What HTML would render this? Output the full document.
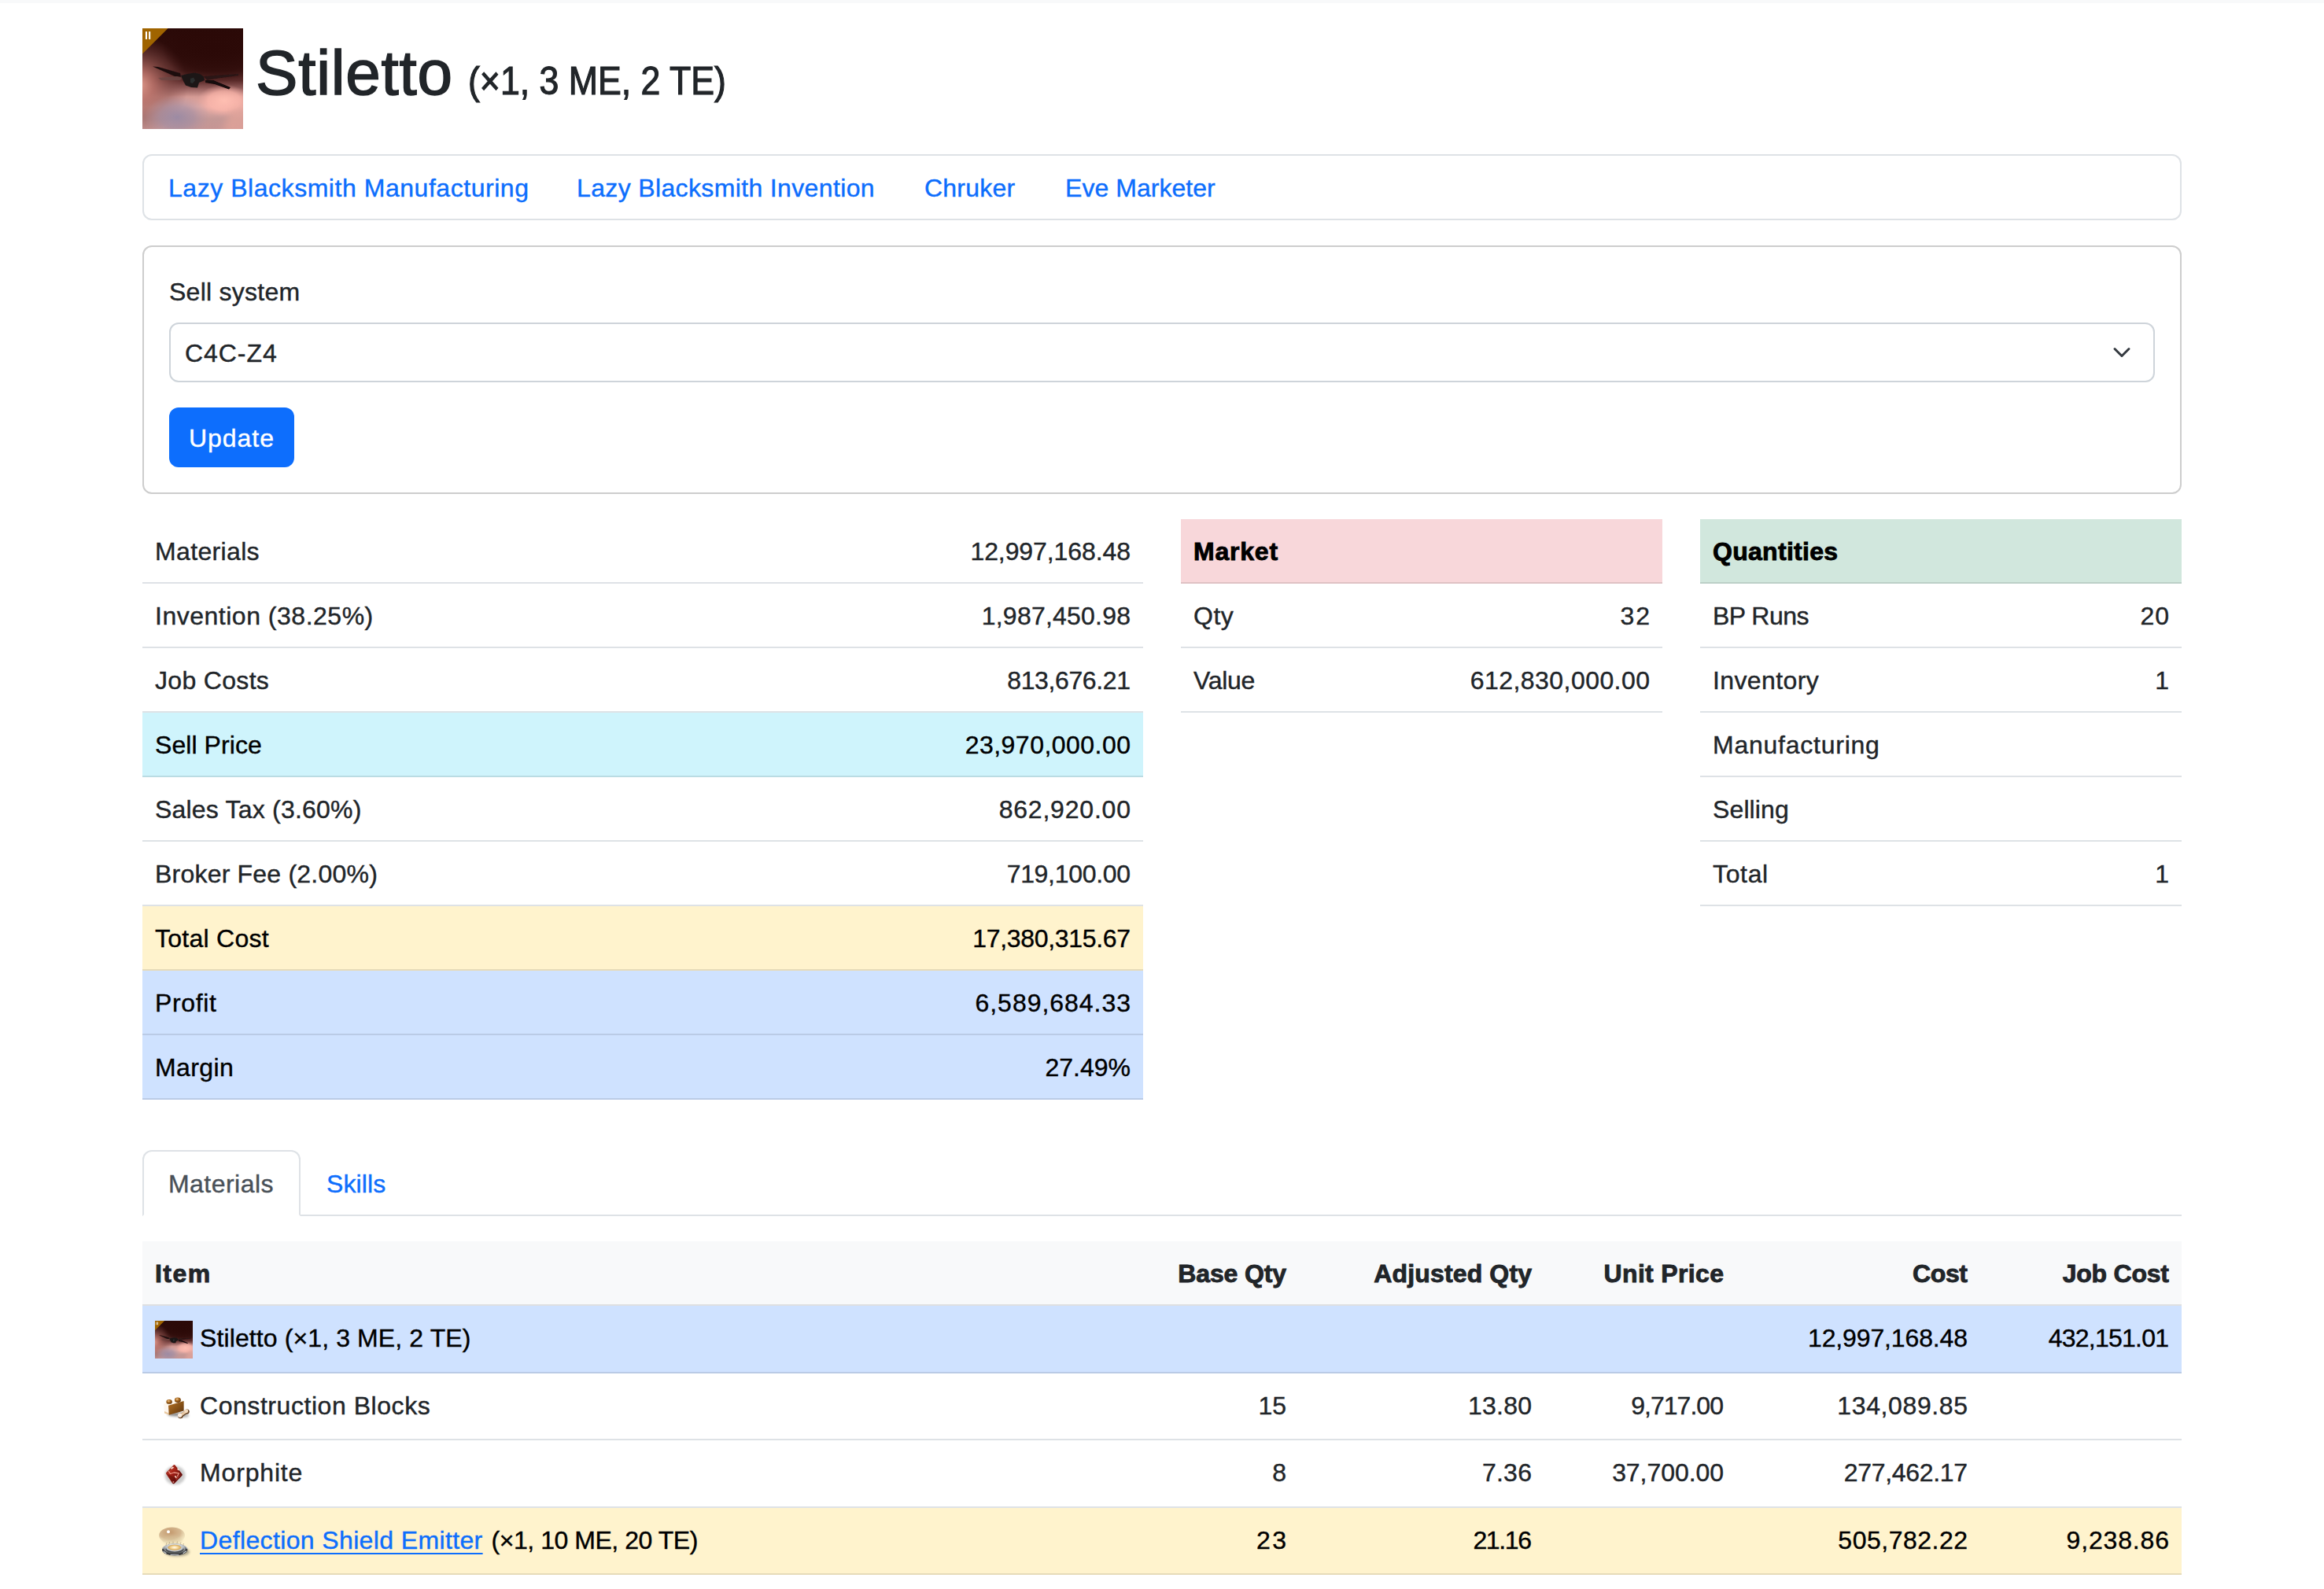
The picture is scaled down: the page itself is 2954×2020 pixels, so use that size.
<!DOCTYPE html>
<html lang="en">
<head>
<meta charset="utf-8">
<title>Stiletto</title>
<style>
*{box-sizing:border-box}
html,body{margin:0;padding:0}
body{width:2954px;height:2020px;overflow:hidden;background:#fff;color:#212529;
  font-family:"Liberation Sans",sans-serif;font-size:32px;line-height:48px;position:relative;
  -webkit-text-stroke:0.4px currentColor}
a{color:#0d6efd;text-decoration:none}
span{white-space:nowrap}
.topbar{position:absolute;left:0;top:0;width:2954px;height:4px;background:#f8f9fa}
.wrap{position:absolute;left:181px;top:0;width:2592px}
/* title */
.title{position:absolute;left:0;top:36px;height:128px;width:2592px}
.title .pic{position:absolute;left:0;top:0;width:128px;height:128px}
.title h1{position:absolute;left:144px;top:9px;margin:0;font-size:80px;line-height:96px;font-weight:400;white-space:nowrap;color:#212529;-webkit-text-stroke:1.6px currentColor}
.title h1 small{position:absolute;left:270px;top:10px;font-size:50px;-webkit-text-stroke:1.2px currentColor;transform:scaleX(.893);transform-origin:0 0}
/* nav links */
.links{position:absolute;left:0;top:196px;width:2592px;height:84px;border:2px solid #dee2e6;border-radius:12px;white-space:nowrap}
.links a{position:absolute;top:17px;line-height:48px}
/* form card */
.card{position:absolute;left:0;top:312px;width:2592px;height:316px;border:2px solid #cdcdcd;border-radius:12px}
.card label{position:absolute;left:32px;top:33px}
.card .select{position:absolute;left:32px;top:96px;width:2524px;height:76px;border:2px solid #ced4da;border-radius:12px;padding:13px 0 0 18px}
.card .select svg{position:absolute;right:24px;top:24px;width:32px;height:24px}
.card .btn{position:absolute;left:32px;top:204px;width:159px;height:76px;background:#0d6efd;border-radius:12px;color:#fff;text-align:center;padding-top:15px;line-height:48px}
/* tables */
table{border-collapse:separate;border-spacing:0;position:absolute;table-layout:fixed}
td,th{padding:17px 16px 0;height:82px;border-bottom:2px solid #dee2e6;vertical-align:top;white-space:nowrap;text-align:left;font-weight:400}
th{font-weight:700;-webkit-text-stroke:0.9px currentColor}
.r{text-align:right}
.t1{left:0;top:660px;width:1272px}
.t2{left:1320px;top:660px;width:612px}
.t3{left:1980px;top:660px;width:612px}
tr.info td{background:#cff4fc;color:#000;border-color:#badce3}
tr.warn td{background:#fff3cd;color:#000;border-color:#e6dbb9}
tr.prim td{background:#cfe2ff;color:#000;border-color:#bacbe6}
tr.dang th{background:#f8d7da;color:#000;border-color:#dfc2c4}
tr.succ th{background:#d1e7dd;color:#000;border-color:#bcd0c7}
tr.light th{background:#f8f9fa;color:#212529;border-color:#dfe0e1}
/* tabs */
.tabs{position:absolute;left:0;top:1462px;width:2592px;height:84px;border-bottom:2px solid #dee2e6}
.tabs .act{position:absolute;left:0;top:0;width:201px;height:84px;border:2px solid #dee2e6;border-bottom-color:#fff;border-radius:12px 12px 0 0;background:#fff;color:#495057;padding:17px 0 0 31px;line-height:48px}
.tabs .oth{position:absolute;left:234px;top:19px;line-height:48px}
/* materials table */
.t4{left:0;top:1578px;width:2592px}
.t4 td.i{position:relative;padding-left:73px}
.t4 td.i .ic{position:absolute;left:16px;top:19px;width:48px;height:48px}
.t4 td a{text-decoration:underline;text-decoration-thickness:2px;text-underline-offset:5px}
</style>
</head>
<body>
<svg width="0" height="0" style="position:absolute">
<defs>
  <linearGradient id="gBg" x1="0" y1="0" x2="0" y2="1">
    <stop offset="0" stop-color="#2a0907"/><stop offset=".25" stop-color="#2f0d0b"/><stop offset=".42" stop-color="#3d1715"/>
    <stop offset=".52" stop-color="#5a2a29"/><stop offset=".6" stop-color="#96605e"/><stop offset=".68" stop-color="#d49a94"/>
    <stop offset=".78" stop-color="#e6aea8"/><stop offset=".9" stop-color="#c49896"/><stop offset="1" stop-color="#c69594"/>
  </linearGradient>
  <radialGradient id="gL" cx="-4" cy="72" r="62" gradientUnits="userSpaceOnUse"><stop offset="0" stop-color="#e09a8c"/><stop offset=".3" stop-color="#b87068" stop-opacity=".85"/><stop offset=".65" stop-color="#8a504c" stop-opacity=".5"/><stop offset="1" stop-color="#7a4040" stop-opacity="0"/></radialGradient>
  <radialGradient id="gB" cx="44" cy="112" r="42" gradientUnits="userSpaceOnUse" gradientTransform="translate(0 38) scale(1 .667)"><stop offset="0" stop-color="#9a8aa4" stop-opacity=".95"/><stop offset=".5" stop-color="#a48ea2" stop-opacity=".7"/><stop offset="1" stop-color="#b494a0" stop-opacity="0"/></radialGradient>
  <radialGradient id="gP" cx="104" cy="92" r="34" gradientUnits="userSpaceOnUse" gradientTransform="translate(0 36.8) scale(1 .6)"><stop offset="0" stop-color="#ffbfb2"/><stop offset=".6" stop-color="#ffb8ac" stop-opacity=".7"/><stop offset="1" stop-color="#f0a8a0" stop-opacity="0"/></radialGradient>
  <radialGradient id="gD" cx="95" cy="25" r="70" gradientUnits="userSpaceOnUse" gradientTransform="translate(0 10) scale(1 .6)"><stop offset="0" stop-color="#2b0907"/><stop offset=".7" stop-color="#2b0907" stop-opacity=".6"/><stop offset="1" stop-color="#2b0907" stop-opacity="0"/></radialGradient>
  <filter id="fB" x="-20%" y="-20%" width="140%" height="140%"><feGaussianBlur stdDeviation="0.7"/></filter><filter id="fC" x="-40%" y="-40%" width="180%" height="180%"><feGaussianBlur stdDeviation="5"/></filter>
  <symbol id="ship" viewBox="0 0 128 128">
    <rect width="128" height="128" fill="url(#gBg)"/>
    <rect width="128" height="128" fill="url(#gL)"/>
    <rect width="128" height="128" fill="url(#gD)"/>
    <rect width="128" height="128" fill="url(#gP)"/>
    <rect width="128" height="128" fill="url(#gB)"/>
    <path d="M134 98 L112 104 L100 134 L134 134Z" fill="#e4a49a" opacity=".7" filter="url(#fC)"/>
    <g filter="url(#fB)">
      <path d="M13 48.5 L20 49 L48 57 L49 61.5 L41 61 Z" fill="#1d0c0d"/>
      <path d="M20 63 L44 61 L50 63 L48 66 L24 66Z" fill="#6a4844" opacity=".75"/>
      <path d="M49 60 L57 58 L66 56.5 L73 58 L78 61.5 L79 66 L72 69 L70 75.5 L62 75 L55 72.5 L52 67 Z" fill="#1b1717"/>
      <path d="M78 61 L96 59.5 L122 58 L122 60 L96 63.5 L82 66 Z" fill="#2a1414"/>
      <path d="M80 66 L90 66 L112 75 L110 77.5 L92 71 L80 69 Z" fill="#120708"/>
      <path d="M61 64 L65 62.5 L67 66 L64 70 L61 69Z" fill="#3a3f40" opacity=".55"/>
    </g>
    <path d="M0 0H32.5L0 32.5Z" fill="#a06400"/>
    <rect x="3.9" y="4.1" width="2.1" height="9.8" fill="#fff"/><rect x="8.1" y="4.1" width="2.1" height="9.8" fill="#fff"/>
  </symbol>
</defs>
</svg>
<svg width="0" height="0" style="position:absolute">
<defs>
  <filter id="fS" x="-50%" y="-50%" width="200%" height="200%"><feGaussianBlur stdDeviation="1.6"/></filter>
  <filter id="fT" x="-50%" y="-50%" width="200%" height="200%"><feGaussianBlur stdDeviation="0.35"/></filter>
  <linearGradient id="cbF" x1="0" y1="0" x2="1" y2="1"><stop offset="0" stop-color="#b87428"/><stop offset=".5" stop-color="#8a5418"/><stop offset="1" stop-color="#5a3410"/></linearGradient>
  <radialGradient id="cbS" cx=".4" cy=".35" r=".7"><stop offset="0" stop-color="#f0c890"/><stop offset=".45" stop-color="#a86820"/><stop offset="1" stop-color="#5a3008"/></radialGradient>
  <linearGradient id="cbB" x1="0" y1="0" x2="1" y2="1"><stop offset="0" stop-color="#fff4e4"/><stop offset=".55" stop-color="#e0b890"/><stop offset="1" stop-color="#7a5030"/></linearGradient>
  <linearGradient id="moG" x1="0" y1="0" x2="1" y2="1"><stop offset="0" stop-color="#d85844"/><stop offset=".35" stop-color="#a82418"/><stop offset=".7" stop-color="#7c140c"/><stop offset="1" stop-color="#500a06"/></linearGradient>
  <radialGradient id="dsD" cx=".42" cy=".3" r=".75"><stop offset="0" stop-color="#c09468" stop-opacity=".95"/><stop offset=".55" stop-color="#c4a078" stop-opacity=".7"/><stop offset="1" stop-color="#d8c8a0" stop-opacity="0"/></radialGradient>
  <radialGradient id="dsG" cx=".5" cy=".5" r=".5"><stop offset="0" stop-color="#fffdf2"/><stop offset=".45" stop-color="#f8dca4"/><stop offset="1" stop-color="#d4a450"/></radialGradient>
  <linearGradient id="dsR" x1="0" y1="0" x2="0" y2="1"><stop offset="0" stop-color="#e8ecee"/><stop offset=".5" stop-color="#9aa0a4"/><stop offset="1" stop-color="#5a5e60"/></linearGradient>
</defs>
</svg>

<div class="topbar"></div>
<div class="wrap">

<div class="title">
  <svg class="pic" viewBox="0 0 128 128"><use href="#ship"/></svg>
  <h1><span style="letter-spacing:0.79px">Stiletto</span><small><span>(×1, 3 ME, 2 TE)</span></small></h1>
</div>

<div class="links">
  <a href="#" style="left:31px"><span style="letter-spacing:0.54px">Lazy Blacksmith Manufacturing</span></a>
  <a href="#" style="left:550px"><span style="letter-spacing:0.36px">Lazy Blacksmith Invention</span></a>
  <a href="#" style="left:992px"><span style="letter-spacing:0.22px">Chruker</span></a>
  <a href="#" style="left:1171px"><span style="letter-spacing:0.04px">Eve Marketer</span></a>
</div>

<div class="card">
  <label><span style="letter-spacing:0.26px">Sell system</span></label>
  <div class="select"><span style="letter-spacing:0.94px">C4C-Z4</span><svg viewBox="0 0 32 24"><path d="M7 7.5L16 16.5L25 7.5" fill="none" stroke="#343a40" stroke-width="3" stroke-linecap="round" stroke-linejoin="round"/></svg></div>
  <div class="btn"><span style="letter-spacing:0.96px">Update</span></div>
</div>

<table class="t1">
  <tr><td><span style="letter-spacing:0.35px">Materials</span></td><td class="r"><span style="letter-spacing:-0.09px;margin-right:0.09px">12,997,168.48</span></td></tr>
  <tr><td><span style="letter-spacing:0.51px">Invention (38.25%)</span></td><td class="r"><span style="letter-spacing:0.22px;margin-right:-0.22px">1,987,450.98</span></td></tr>
  <tr><td><span style="letter-spacing:0.32px">Job Costs</span></td><td class="r"><span style="letter-spacing:-0.38px;margin-right:0.38px">813,676.21</span></td></tr>
  <tr class="info"><td><span style="letter-spacing:0.07px">Sell Price</span></td><td class="r"><span style="letter-spacing:0.47px;margin-right:-0.47px">23,970,000.00</span></td></tr>
  <tr><td><span style="letter-spacing:0.20px">Sales Tax (3.60%)</span></td><td class="r"><span style="letter-spacing:0.80px;margin-right:-0.80px">862,920.00</span></td></tr>
  <tr><td><span style="letter-spacing:0.21px">Broker Fee (2.00%)</span></td><td class="r"><span style="letter-spacing:-0.31px;margin-right:0.31px">719,100.00</span></td></tr>
  <tr class="warn"><td><span style="letter-spacing:0.26px">Total Cost</span></td><td class="r"><span style="letter-spacing:-0.33px;margin-right:0.33px">17,380,315.67</span></td></tr>
  <tr class="prim"><td><span style="letter-spacing:0.64px">Profit</span></td><td class="r"><span style="letter-spacing:0.97px;margin-right:-0.97px">6,589,684.33</span></td></tr>
  <tr class="prim"><td><span style="letter-spacing:0.40px">Margin</span></td><td class="r"><span>27.49%</span></td></tr>
</table>

<table class="t2">
  <tr class="dang"><th colspan="2"><span style="letter-spacing:0.78px">Market</span></th></tr>
  <tr><td><span style="letter-spacing:0.50px">Qty</span></td><td class="r"><span style="letter-spacing:2.00px;margin-right:-2.00px">32</span></td></tr>
  <tr><td><span style="letter-spacing:-0.27px">Value</span></td><td class="r"><span style="letter-spacing:0.44px;margin-right:-0.44px">612,830,000.00</span></td></tr>
</table>

<table class="t3">
  <tr class="succ"><th colspan="2"><span style="letter-spacing:0.29px">Quantities</span></th></tr>
  <tr><td><span style="letter-spacing:-0.55px">BP Runs</span></td><td class="r"><span style="letter-spacing:1.00px;margin-right:-1.00px">20</span></td></tr>
  <tr><td><span style="letter-spacing:0.38px">Inventory</span></td><td class="r">1</td></tr>
  <tr><td><span style="letter-spacing:0.76px">Manufacturing</span></td><td class="r"></td></tr>
  <tr><td><span style="letter-spacing:0.12px">Selling</span></td><td class="r"></td></tr>
  <tr><td><span style="letter-spacing:0.65px">Total</span></td><td class="r">1</td></tr>
</table>

<div class="tabs">
  <div class="act"><span style="letter-spacing:0.46px">Materials</span></div>
  <a class="oth" href="#"><span style="letter-spacing:0.10px">Skills</span></a>
</div>

<table class="t4">
  <colgroup><col style="width:1158px"><col style="width:312px"><col style="width:312px"><col style="width:244px"><col style="width:310px"><col style="width:256px"></colgroup>
  <tr class="light"><th><span style="letter-spacing:1.47px">Item</span></th><th class="r"><span style="letter-spacing:-0.14px;margin-right:0.14px">Base Qty</span></th><th class="r"><span style="letter-spacing:0.14px;margin-right:-0.14px">Adjusted Qty</span></th><th class="r"><span style="letter-spacing:0.34px;margin-right:-0.34px">Unit Price</span></th><th class="r"><span style="letter-spacing:-0.40px;margin-right:0.40px">Cost</span></th><th class="r"><span style="letter-spacing:-0.23px;margin-right:0.23px">Job Cost</span></th></tr>
  <tr class="prim" style="height:86px"><td class="i"><svg class="ic" viewBox="0 0 128 128"><use href="#ship"/></svg><span style="letter-spacing:0.11px">Stiletto (×1, 3 ME, 2 TE)</span></td><td></td><td></td><td></td><td class="r"><span style="letter-spacing:-0.14px;margin-right:0.14px">12,997,168.48</span></td><td class="r"><span style="letter-spacing:-0.77px;margin-right:0.77px">432,151.01</span></td></tr>
  <tr style="height:85px"><td class="i"><svg class="ic" viewBox="0 0 48 48"><ellipse cx="27" cy="33" rx="11" ry="2.6" fill="#000" opacity=".45" filter="url(#fS)"/><ellipse cx="38" cy="34.5" rx="5" ry="2.2" fill="#000" opacity=".3" filter="url(#fS)"/><g filter="url(#fT)"><path d="M11.1 19.5L30 13.5L36.6 16L17 21.8Z" fill="#fff6e8"/><path d="M11.1 19.5L17 21.8L17.7 33.7L12 31.5Z" fill="#fdf6ee"/><path d="M12 29L17.6 31.5L17.7 33.7L12 31.5Z" fill="#e8c8a0"/><path d="M17 21.8L36.6 16L36.6 28.4L17.7 33.7Z" fill="url(#cbF)"/><ellipse cx="18.1" cy="16.9" rx="3.8" ry="2.9" fill="url(#cbS)"/><ellipse cx="28.9" cy="14.7" rx="4" ry="3.3" fill="url(#cbS)"/><path d="M32.2 35.2L41 29.2" stroke="#5a3a20" stroke-width="4.6" stroke-linecap="round"/><circle cx="32.4" cy="35" r="3.3" fill="#6a4426"/><circle cx="40.6" cy="29.6" r="3.1" fill="#6a4426"/><path d="M31.8 34.6L40.4 28.8" stroke="#e8c8a4" stroke-width="3.2" stroke-linecap="round"/><circle cx="31.6" cy="34.2" r="2.6" fill="#fbeee0"/><circle cx="39.8" cy="28.8" r="2.4" fill="#f4dcc0"/></g></svg><span style="letter-spacing:0.55px">Construction Blocks</span></td><td class="r"><span style="letter-spacing:-0.10px;margin-right:0.10px">15</span></td><td class="r"><span style="letter-spacing:0.23px;margin-right:-0.23px">13.80</span></td><td class="r"><span style="letter-spacing:-0.96px;margin-right:0.96px">9,717.00</span></td><td class="r"><span style="letter-spacing:0.61px;margin-right:-0.61px">134,089.85</span></td><td></td></tr>
  <tr style="height:86px"><td class="i"><svg class="ic" viewBox="0 0 48 48"><ellipse cx="25.5" cy="25.5" rx="13" ry="12" fill="#000" opacity=".2" filter="url(#fS)"/><g filter="url(#fT)"><path d="M24.5 14L33 24.8L23.6 34.4L15.8 22.9Z" fill="url(#moG)" stroke="url(#moG)" stroke-width="3.6" stroke-linejoin="round"/><path d="M24.5 13L34 24.8L23.5 35.4L14.8 22.8Z" fill="none" stroke="#4a0a08" stroke-width=".7" stroke-linejoin="round" opacity=".7"/><path d="M17.5 20.5L19.5 23.5L24 22L30.5 22.8L28.5 26.5" fill="none" stroke="#f4a494" stroke-width="1.3" stroke-linecap="round" stroke-linejoin="round" opacity=".9"/><path d="M21 16.8L23 15.6M29 17.5L30 18.5M25.8 26.8L27 28.2" stroke="#ffe0d4" stroke-width="1.7" stroke-linecap="round"/><path d="M16 24L23.5 34.5L28 30L22 27Z" fill="#5a0c08" opacity=".5"/><path d="M26 29L31 26L33 25L27 32Z" fill="#c84838" opacity=".6"/><circle cx="23.4" cy="34" r="1" fill="#f0b0a0" opacity=".8"/></g></svg><span style="letter-spacing:0.84px">Morphite</span></td><td class="r">8</td><td class="r"><span style="letter-spacing:0.27px;margin-right:-0.27px">7.36</span></td><td class="r"><span style="letter-spacing:-0.06px;margin-right:0.06px">37,700.00</span></td><td class="r"><span style="letter-spacing:-0.32px;margin-right:0.32px">277,462.17</span></td><td></td></tr>
  <tr class="warn" style="height:85px"><td class="i"><svg class="ic" viewBox="0 0 48 48"><ellipse cx="21.6" cy="16" rx="16.5" ry="10.5" fill="url(#dsD)"/><ellipse cx="22" cy="22" rx="13" ry="6" fill="#d8c8a0" opacity=".35" filter="url(#fS)"/><circle cx="17" cy="11.2" r="2" fill="#fff" filter="url(#fT)"/><ellipse cx="28" cy="37" rx="16" ry="5.5" fill="#000" opacity=".3" filter="url(#fS)"/><g filter="url(#fT)"><ellipse cx="25.2" cy="34" rx="16.2" ry="7.6" fill="#3c3e40"/><path d="M9.5 33 A16 7.4 0 0 1 41 33" fill="none" stroke="#b8bcc0" stroke-width="1.4"/><ellipse cx="25" cy="32.8" rx="13.8" ry="6.2" fill="url(#dsR)"/><ellipse cx="25" cy="33.6" rx="11.6" ry="4.4" fill="#4a4c4e"/><ellipse cx="25" cy="31.9" rx="10.8" ry="4.5" fill="#c4c8cc"/><ellipse cx="24.8" cy="31.2" rx="8.4" ry="3.5" fill="url(#dsG)"/><path d="M11 36.5L14 38.5M20 40.5L30 40.8M36 38.5L39.5 36" stroke="#c8ccd0" stroke-width="1.2" stroke-linecap="round"/><path d="M14 28.5L15 25M18 27L18.5 24M23 26L23 23.5M28 26L28.5 23.5M32 27L33 24.5M35.5 28.5L36.5 26" stroke="#a89878" stroke-width=".8" opacity=".8"/></g></svg><a href="#"><span style="letter-spacing:0.37px">Deflection Shield Emitter</span></a> <span style="margin-left:2px"></span><span style="letter-spacing:-0.46px">(×1, 10 ME, 20 TE)</span></td><td class="r"><span style="letter-spacing:2.50px;margin-right:-2.50px">23</span></td><td class="r"><span style="letter-spacing:-1.38px;margin-right:1.38px">21.16</span></td><td></td><td class="r"><span style="letter-spacing:0.50px;margin-right:-0.50px">505,782.22</span></td><td class="r"><span style="letter-spacing:0.84px;margin-right:-0.84px">9,238.86</span></td></tr>
</table>

</div>
<script>(function(){var w=window.innerWidth;if(w&&(w<2900||w>3010)){document.body.style.zoom=w/2954;}})();</script>
</body>
</html>
